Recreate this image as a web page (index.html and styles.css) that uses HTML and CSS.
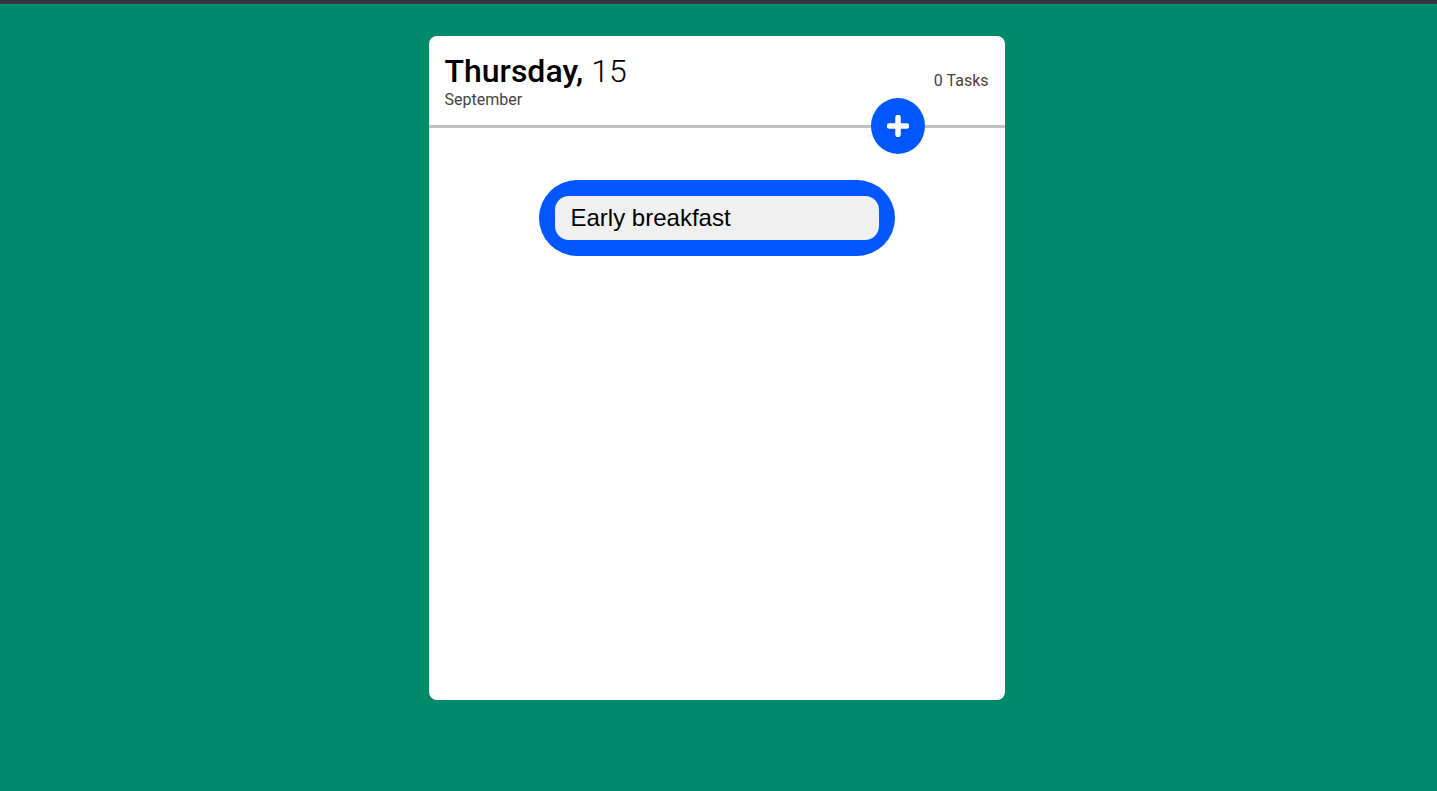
FILE: index.html
```html
<!DOCTYPE html>
<html>
<head>
<meta charset="utf-8">
<link rel="stylesheet" href="styles.css">
</head>
<body>
<div class="topbar"></div>
<main class="page">
  <section class="card">
    <header class="card-head">
      <div class="date">
        <div class="day"><strong>Thursday,</strong> <span class="num">15</span></div>
        <div class="month">September</div>
      </div>
      <div class="count">0 Tasks</div>
      <button class="add" aria-label="Add task">
        <svg width="22" height="22" viewBox="0 0 22 22"><path d="M11 2.5v17M2.5 11h17" stroke="#fff" stroke-width="5.5" stroke-linecap="round"/></svg>
      </button>
    </header>
    <div class="tasks">
      <div class="task-form">
        <input class="task-input" type="text" value="Early breakfast">
      </div>
    </div>
  </section>
</main>
</body>
</html>
```
FILE: styles.css
```css
* { box-sizing: border-box; }
html, body { margin: 0; padding: 0; }
body {
  background: #008a6a;
  font-family: Roboto, "Liberation Sans", sans-serif;
  height: 791px;
  overflow: hidden;
}
.topbar { height: 4px; background: #2f3541; }
.page {
  display: flex;
  justify-content: center;
  padding-top: 32px;
}
.card {
  width: 576px;
  height: 664px;
  background: #fff;
  border-radius: 8px;
  margin-left: -4px;
}
.card-head {
  position: relative;
  display: flex;
  justify-content: space-between;
  align-items: flex-start;
  padding: 16px 16px 16px;
  border-bottom: 3px solid #c0c0c0;
}
.day {
  font-size: 32px;
  line-height: 38px;
  color: #000;
}
.day strong { font-weight: 500; }
.day .num { font-weight: 300; }
.month {
  font-size: 16px;
  line-height: 18px;
  color: #444;
  margin-top: 1px;
}
.count {
  font-size: 16px;
  color: #4a4040;
  margin-top: 19px;
}
.add {
  position: absolute;
  right: 80px;
  bottom: -29px;
  width: 54px;
  height: 56px;
  border-radius: 50%;
  border: none;
  background: #0057ff;
  display: flex;
  align-items: center;
  justify-content: center;
  padding: 0;
}
.tasks {
  display: flex;
  justify-content: center;
  padding-top: 52px;
}
.task-form {
  width: 356px;
  height: 76px;
  background: #0057ff;
  border-radius: 38px;
  padding: 16px;
}
.task-input {
  width: 100%;
  height: 44px;
  border: none;
  outline: none;
  border-radius: 14px;
  background: #f0f0f0;
  font-family: "Liberation Sans", Arial, sans-serif;
  font-size: 24px;
  color: #000;
  padding: 0 16px;
}
```
